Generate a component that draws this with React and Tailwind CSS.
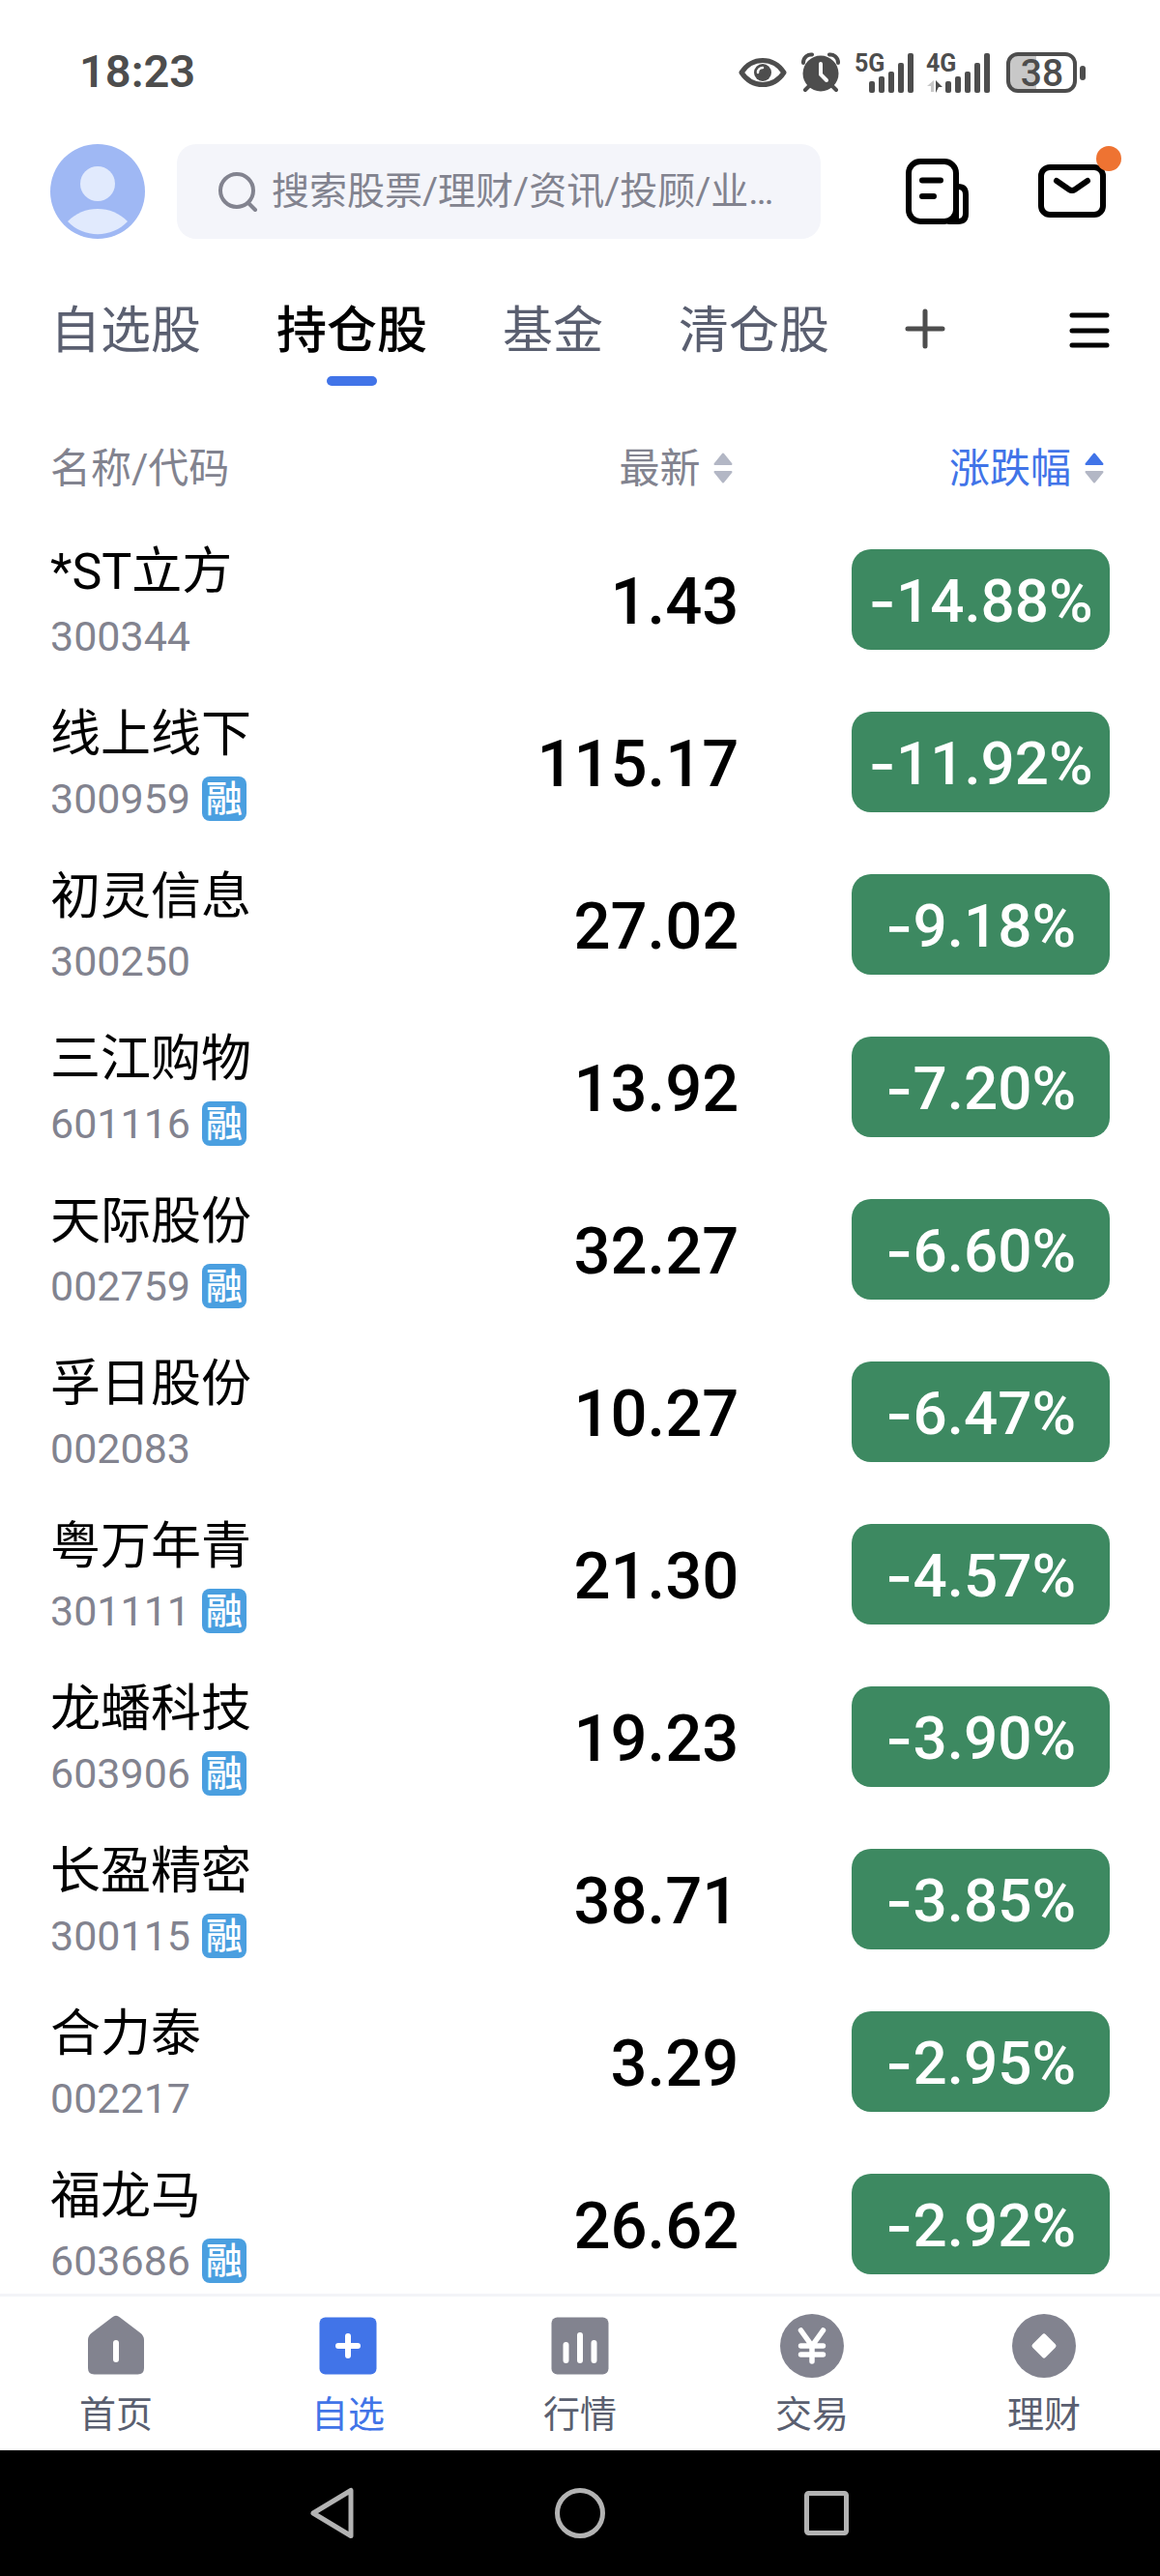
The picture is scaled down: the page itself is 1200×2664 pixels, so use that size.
import { useState } from "react";

const stocks = [
	{ name: "*ST立方", code: "300344", margin: false, price: "1.43", change: "14.88%" },
	{ name: "线上线下", code: "300959", margin: true, price: "115.17", change: "11.92%" },
	{ name: "初灵信息", code: "300250", margin: false, price: "27.02", change: "9.18%" },
	{ name: "三江购物", code: "601116", margin: true, price: "13.92", change: "7.20%" },
	{ name: "天际股份", code: "002759", margin: true, price: "32.27", change: "6.60%" },
	{ name: "孚日股份", code: "002083", margin: false, price: "10.27", change: "6.47%" },
	{ name: "粤万年青", code: "301111", margin: true, price: "21.30", change: "4.57%" },
	{ name: "龙蟠科技", code: "603906", margin: true, price: "19.23", change: "3.90%" },
	{ name: "长盈精密", code: "300115", margin: true, price: "38.71", change: "3.85%" },
	{ name: "合力泰", code: "002217", margin: false, price: "3.29", change: "2.95%" },
	{ name: "福龙马", code: "603686", margin: true, price: "26.62", change: "2.92%" },
];

const tabs = ["自选股", "持仓股", "基金", "清仓股"];

function StatusBar() {
	return (
		<div className="flex h-[149px] shrink-0 items-center justify-between pr-[77px] pl-[82px] text-[#4d4d4d]">
			<span className="text-[47px] font-semibold">18:23</span>
			<div className="flex items-center gap-[15px]">
				<svg className="h-8 w-[50px]" viewBox="0 0 50 32" fill="none">
					<path d="M3 16C9 7 17 3.500 25 3.500S41 7 47 16C41 25 33 28.500 25 28.500S9 25 3 16Z" stroke="currentColor" strokeWidth="5" strokeLinejoin="round" />
					<circle cx="25" cy="16" r="9" fill="currentColor" />
					<path d="M20 16a5 5 0 0 1 5-5" stroke="#fff" strokeWidth="2.500" strokeLinecap="round" />
				</svg>
				<svg className="h-[42px] w-10" viewBox="0 0 40 42" fill="none">
					<circle cx="20" cy="22" r="18.500" fill="currentColor" />
					<path d="M2 11C2 5 7 2 11 2.500M38 11C38 5 33 2 29 2.500M8 35l-4 4M32 35l4 4" stroke="currentColor" strokeWidth="4" strokeLinecap="round" />
					<path d="M20 12v11l6 6" stroke="#fff" strokeWidth="4" strokeLinecap="round" />
				</svg>
				<svg className="h-[54px] w-[142px]" viewBox="0 -6 142 54" fill="currentColor">
					<text x="0" y="20" className="text-[25px] font-bold">5G</text>
					<rect x="15" y="30" width="6" height="12" rx="2" />
					<rect x="25" y="25" width="6" height="17" rx="2" />
					<rect x="35" y="20" width="6" height="22" rx="2" />
					<rect x="45" y="11" width="6" height="31" rx="2" />
					<rect x="55" y="1" width="6" height="41" rx="2" />
					<text x="74" y="20" className="text-[25px] font-bold">4G</text>
					<path d="M82 29v12h-3v-6h-4Z" fill="#c8c8c8" />
					<path d="M84 29l7 7h-4l-3 6Z" />
					<rect x="94" y="30" width="6" height="12" rx="2" />
					<rect x="104" y="25" width="6" height="17" rx="2" />
					<rect x="114" y="20" width="6" height="22" rx="2" />
					<rect x="124" y="11" width="6" height="31" rx="2" />
					<rect x="134" y="1" width="6" height="41" rx="2" />
				</svg>
				<svg className="h-[54px] w-[82px]" viewBox="0 -6 82 54">
					<path d="M12 2h19v38H12Q2 40 2 30V12Q2 2 12 2Z" fill="#c8c8c8" />
					<rect x="2" y="2" width="69" height="38" rx="10" fill="none" stroke="currentColor" strokeWidth="4" />
					<rect x="76" y="14" width="6" height="15" rx="3" fill="currentColor" />
					<text x="37" y="35" textAnchor="middle" className="text-[39px] font-medium" fill="currentColor">38</text>
				</svg>
			</div>
		</div>
	);
}

function SearchHeader() {
	return (
		<header className="flex shrink-0 items-center px-[52px]">
			<button type="button" aria-label="我的" className="mr-[33px]">
				<svg className="size-[98px]" viewBox="0 0 98 98">
					<circle cx="49" cy="49" r="49" fill="#9fb8f4" />
					<circle cx="49" cy="41" r="18" fill="#e1eafd" />
					<path d="M18 80C34 62.500 64 62.500 80 80C64 97.500 34 97.500 18 80Z" fill="#e1eafd" />
				</svg>
			</button>
			<label className="mr-[87px] flex h-[98px] flex-1 items-center gap-3.5 rounded-[20px] bg-[#f4f5fa] pl-[42px]">
				<svg className="size-[42px] shrink-0" viewBox="0 0 42 42" fill="none" stroke="#82838f" strokeWidth="4" strokeLinecap="round">
					<circle cx="20" cy="20" r="17" />
					<path d="M32 33l7 7" />
				</svg>
				<input
					type="text"
					aria-label="搜索"
					className="w-full min-w-0 bg-transparent text-[39px] text-[#82838f] outline-none placeholder:text-[#82838f]"
					placeholder="搜索股票/理财/资讯/投顾/业…"
				/>
			</label>
			<button type="button" aria-label="资讯" className="mr-[70px]">
				<svg className="h-[70px] w-[68px]" viewBox="0 0 68 70" fill="none" stroke="#000" strokeWidth="6" strokeLinecap="round">
					<rect x="4" y="4" width="49" height="62" rx="12" />
					<path d="M53 30h2q8 0 8 8v20q0 8-8 8H46" />
					<path d="M53 34v30" />
					<path d="M18 23.500h19M18 40h12" />
				</svg>
			</button>
			<button type="button" aria-label="消息" className="relative">
				<svg className="h-[70px] w-[74px]" viewBox="0 0 74 70" fill="none" stroke="#000" strokeWidth="6" strokeLinecap="round" strokeLinejoin="round">
					<rect x="3" y="10" width="64" height="49" rx="9" />
					<path d="M19 24l13 9q3 2 6 0l13-9" />
				</svg>
				<span className="absolute -top-3 -right-3 size-[26px] rounded-full bg-[#ee7332]" />
			</button>
		</header>
	);
}

function TabBar() {
	const [active, setActive] = useState("持仓股");

	return (
		<nav className="flex h-[185px] shrink-0 items-start justify-between px-[52px] pt-[60px]">
			<div className="flex gap-[78px]">
				{tabs.map((tab) => (
					<button
						key={tab}
						type="button"
						onClick={() => setActive(tab)}
						className={`flex flex-col items-center gap-2.5 text-[52px] leading-[72px] ${tab === active ? "font-medium text-black" : "text-[#5a5f70]"}`}
					>
						{tab}
						{tab === active && <span className="h-2.5 w-[52px] rounded-full bg-[#4174e8]" />}
					</button>
				))}
				<button type="button" aria-label="添加分组" className="flex h-[66px] items-center">
					<svg className="size-[42px]" viewBox="0 0 42 42" stroke="#4d4d4d" strokeWidth="5" strokeLinecap="round">
						<path d="M21 3v36M3 21h36" />
					</svg>
				</button>
			</div>
			<button type="button" aria-label="菜单" className="flex h-[70px] items-center">
				<svg className="size-[42px]" viewBox="0 0 42 42" stroke="#000" strokeWidth="5" strokeLinecap="round">
					<path d="M3 5h36M3 21h36M3 36h36" />
				</svg>
			</button>
		</nav>
	);
}

function SortIcon({ up = "#b3b7c5" }) {
	return (
		<svg className="h-8 w-5" viewBox="0 0 20 32" strokeWidth="2" strokeLinejoin="round">
			<path d="M10 1.500L18.500 12h-17Z" fill={up} stroke={up} />
			<path d="M10 30.500L18.500 20h-17Z" fill="#b3b7c5" stroke="#b3b7c5" />
		</svg>
	);
}

function StockTable() {
	return (
		<main className="min-h-0 flex-1 overflow-hidden px-[52px]">
			<table className="w-full table-fixed">
				<thead>
					<tr className="h-[104px] text-[42px] text-[#82838f]">
						<th className="w-[35%] text-left font-normal">名称/代码</th>
						<th className="w-[30%] pr-1.5 font-normal">
							<button type="button" className="ml-auto flex items-center gap-3.5">
								最新
								<SortIcon />
							</button>
						</th>
						<th className="w-[35%] pr-1.5 font-normal text-[#4174e8]">
							<button type="button" className="ml-auto flex items-center gap-3.5">
								涨跌幅
								<SortIcon up="#4174e8" />
							</button>
						</th>
					</tr>
				</thead>
				<tbody>
					{stocks.map((stock) => (
						<tr key={stock.code} className="h-[168px]">
							<td className="p-0 pt-2">
								<div className="text-[52px] leading-[68px] text-black">{stock.name}</div>
								<div className="flex h-16 items-center gap-3 text-[43px] text-[#82838f]">
									{stock.code}
									{stock.margin && (
										<span className="flex size-[46px] items-center justify-center rounded-lg bg-[#4a9fe0] text-[38px] leading-none font-medium text-white">融</span>
									)}
								</div>
							</td>
							<td className="p-0 pt-1 text-right text-[67px] leading-none font-medium text-black">{stock.price}</td>
							<td className="p-0">
								<div className="ml-auto flex h-[104px] w-[267px] items-center justify-center rounded-[20px] bg-[#3d8961] pt-0.5 text-[62px] font-medium text-white">
									<span className="font-['Inter']">-</span>
									{stock.change}
								</div>
							</td>
						</tr>
					))}
				</tbody>
			</table>
		</main>
	);
}

function NavItem({ label, active, children }) {
	return (
		<a href="#" className={`flex flex-1 flex-col items-center gap-2 pt-4 text-[38px] leading-[56px] ${active ? "text-[#4174e8]" : "text-[#5a5f70]"}`}>
			<svg className="size-[70px]" viewBox="0 0 70 70" fill={active ? "#4174e8" : "#82838f"} strokeLinecap="round" strokeLinejoin="round">
				{children}
			</svg>
			{label}
		</a>
	);
}

function BottomNav() {
	return (
		<nav className="flex h-[162px] shrink-0 border-t-[3px] border-[#f3f4f8] bg-white">
			<NavItem label="首页">
				<path d="M31 5.500Q35 2 39 5.500L60 21.500Q64 24.500 64 29V58Q64 64.500 57.500 64.500H12.500Q6 64.500 6 58V29Q6 24.500 10 21.500Z" />
				<path d="M35 32v17" stroke="#fff" strokeWidth="6" />
			</NavItem>
			<NavItem label="自选" active>
				<rect x="5.500" y="5.500" width="59" height="59" rx="6" />
				<path d="M35 25v20M25 35h20" stroke="#fff" strokeWidth="6" />
			</NavItem>
			<NavItem label="行情">
				<rect x="5.500" y="5.500" width="59" height="59" rx="6" />
				<path d="M20.500 34v16M35 24v26M49.500 32v18" stroke="#fff" strokeWidth="6" />
			</NavItem>
			<NavItem label="交易">
				<circle cx="35" cy="35" r="33" />
				<path d="M23.500 19L35 35L46.500 19M35 35v16M23.500 35h23M23.500 44h23" fill="none" stroke="#fff" strokeWidth="5.500" />
			</NavItem>
			<NavItem label="理财">
				<circle cx="35" cy="35" r="33" />
				<path d="M35 25L45 35L35 45L25 35Z" fill="#fff" stroke="#fff" strokeWidth="5" />
			</NavItem>
		</nav>
	);
}

function SystemNav() {
	return (
		<div className="flex h-[130px] shrink-0 items-center justify-center gap-[201px] bg-black">
			<button type="button" aria-label="返回">
				<svg className="size-[54px]" viewBox="0 0 54 54" fill="none" stroke="#b3b3b3" strokeWidth="5" strokeLinejoin="round">
					<path d="M45 3.500V50.500L6 27Z" />
				</svg>
			</button>
			<button type="button" aria-label="主页">
				<svg className="size-[54px]" viewBox="0 0 54 54" fill="none" stroke="#b3b3b3" strokeWidth="5">
					<circle cx="27" cy="27" r="23.500" />
				</svg>
			</button>
			<button type="button" aria-label="最近任务">
				<svg className="size-[54px]" viewBox="0 0 54 54" fill="none" stroke="#b3b3b3" strokeWidth="5">
					<rect x="6.500" y="6.500" width="41" height="41" rx="2" />
				</svg>
			</button>
		</div>
	);
}

function App() {
	return (
		<div className="flex h-screen flex-col bg-white font-['Roboto','Noto_Sans_CJK_SC',sans-serif]">
			<StatusBar />
			<SearchHeader />
			<TabBar />
			<StockTable />
			<BottomNav />
			<SystemNav />
		</div>
	);
}

export default App;
